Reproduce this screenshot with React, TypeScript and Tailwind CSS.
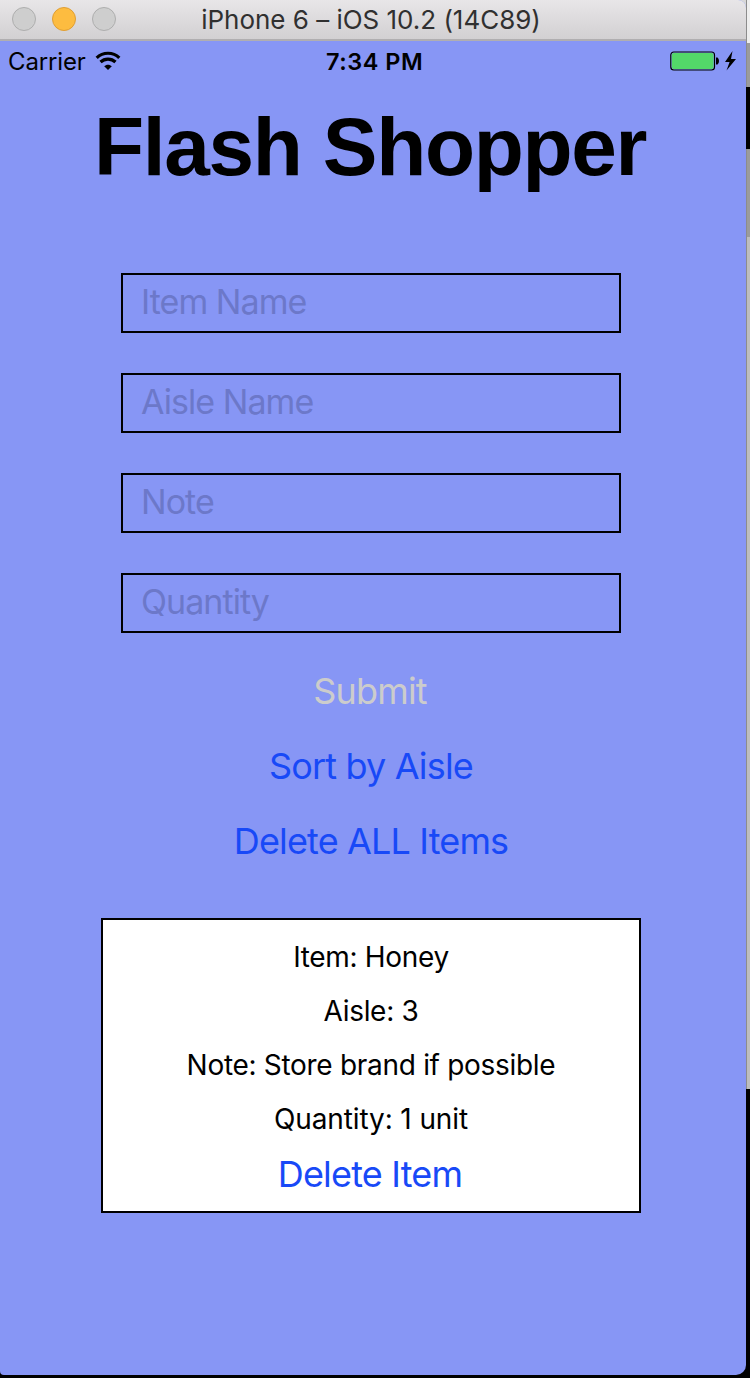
import React, { useState } from "react";

const FIELDS = ["Item Name", "Aisle Name", "Note", "Quantity"];

const DETAILS = [
  { text: "Item: Honey", tracking: "tracking-[-0.33px]" },
  { text: "Aisle: 3", tracking: "tracking-[-0.3px]" },
  { text: "Note: Store brand if possible", tracking: "tracking-[-0.3px]" },
  { text: "Quantity: 1 unit", tracking: "tracking-[-0.12px]" },
];

function TitleBar() {
  return (
    <header className="relative flex h-[41px] shrink-0 items-center justify-center border-b-2 border-[#b0aeb0] bg-linear-to-b from-[#e8e6e8] to-[#d2d0d2] pr-1">
      <div className="absolute left-3 top-[7px] flex gap-4">
        <span className="size-6 rounded-full border border-[#aeaeae] bg-[#cecece]" />
        <span className="size-6 rounded-full border border-[#df9e34] bg-[#fdbc40]" />
        <span className="size-6 rounded-full border border-[#aeaeae] bg-[#cecece]" />
      </div>
      <span className="whitespace-nowrap text-[26px] leading-[38px] tracking-[-0.02px] text-[#303030]">
        iPhone 6 – iOS 10.2 (14C89)
      </span>
    </header>
  );
}

function WifiIcon() {
  return (
    <svg width="26" height="20" viewBox="0 0 26 20" fill="none" stroke="#000">
      <path d="M1.7 6.9C8 .7 18 .7 24.3 6.9" strokeWidth="3.2" />
      <path d="M5.5 11C9.7 7.1 16.3 7.1 20.5 11" strokeWidth="3.2" />
      <path d="M9.2 15.3C11.2 13.1 14.8 13.1 16.8 15.3L13 19.1Z" fill="#000" stroke="none" />
    </svg>
  );
}

function StatusBar() {
  return (
    <div className="relative flex h-10 shrink-0 items-center justify-between pl-2 pr-[9px] text-black">
      <div className="flex items-center gap-[9px]">
        <span className="pt-px text-[24px] leading-10 tracking-[-0.15px]">Carrier</span>
        <WifiIcon />
      </div>
      <span className="absolute left-[326px] top-0 whitespace-nowrap text-[23.5px] font-semibold leading-[42px] tracking-[0.5px]">
        7:34 PM
      </span>
      <svg width="68" height="20" viewBox="0 0 68 20">
        <rect x="1.8" y="1" width="43.7" height="18" rx="3" fill="#8796f5" stroke="#000" strokeWidth="1.2" />
        <rect x="2.8" y="2" width="41.7" height="16" rx="2" fill="#53d769" />
        <path d="M47 6.5h1.5q1.5 1 1.5 3.5t-1.5 3.5H47z" fill="#000" />
        <path d="M63.5 0L56 11h4.6L57.5 19.5 67 8h-5z" fill="#000" />
      </svg>
    </div>
  );
}

function Desktop() {
  return (
    <div className="flex w-1 flex-col border-l border-[#8c8c8c]">
      <div className="h-[43px] bg-[#eeeeee]" />
      <div className="h-[44px] bg-[#9b9b9b]" />
      <div className="-ml-px h-[62px] bg-black" />
      <div className="h-[88px] bg-[#9b9b9b]" />
      <div className="h-[852px] bg-[#bdbdbd]" />
      <div className="-ml-px grow bg-black" />
    </div>
  );
}

export default function App() {
  const [values, setValues] = useState<Record<string, string>>({});
  return (
    <div className="flex h-[1378px] w-[750px] overflow-hidden bg-linear-to-b from-[#d8d8d8] from-[43px] to-black to-[43px] font-['Inter',sans-serif]">
      <main className="flex h-[1375px] w-[746px] flex-col overflow-hidden rounded-bl-[4px] rounded-br-[10px] rounded-tr-[8px] bg-[#8796f5]">
        <TitleBar />
        <StatusBar />
        <h1 className="mt-[20px] whitespace-nowrap pl-[94px] font-['Liberation_Sans',sans-serif] text-[82px] font-bold leading-[92px] tracking-[-1.35px]">
          Flash Shopper
        </h1>
        <div className="mr-1 flex flex-col items-center">
          <form className="mt-[80px] flex w-[500px] flex-col gap-10">
            {FIELDS.map((f) => (
              <input
                key={f}
                placeholder={f}
                value={values[f] ?? ""}
                onChange={(e) => setValues({ ...values, [f]: e.target.value })}
                className="h-[60px] border-2 border-black bg-transparent pb-1 pl-[18px] text-[34px] tracking-[-0.95px] outline-none placeholder:text-[#6c78c9]"
              />
            ))}
          </form>
          <nav className="mt-[21px] flex flex-col items-center text-[36px] leading-[75px] text-[#1849f7]">
            <button className="-translate-x-px tracking-[-0.8px] text-[#cccccc]">Submit</button>
            <button className="tracking-[-0.85px]">Sort by Aisle</button>
            <button className="tracking-[-0.85px]">Delete ALL Items</button>
          </nav>
          <section className="mt-[39px] flex h-[295px] w-[540px] flex-col items-center border-2 border-black bg-white pt-[10px] text-[28px] leading-[54px]">
            {DETAILS.map((d) => (
              <p key={d.text} className={d.tracking}>
                {d.text}
              </p>
            ))}
            <button className="-translate-x-px text-[36px] leading-[56px] tracking-[-0.8px] text-[#1849f7]">
              Delete Item
            </button>
          </section>
        </div>
      </main>
      <Desktop />
    </div>
  );
}
